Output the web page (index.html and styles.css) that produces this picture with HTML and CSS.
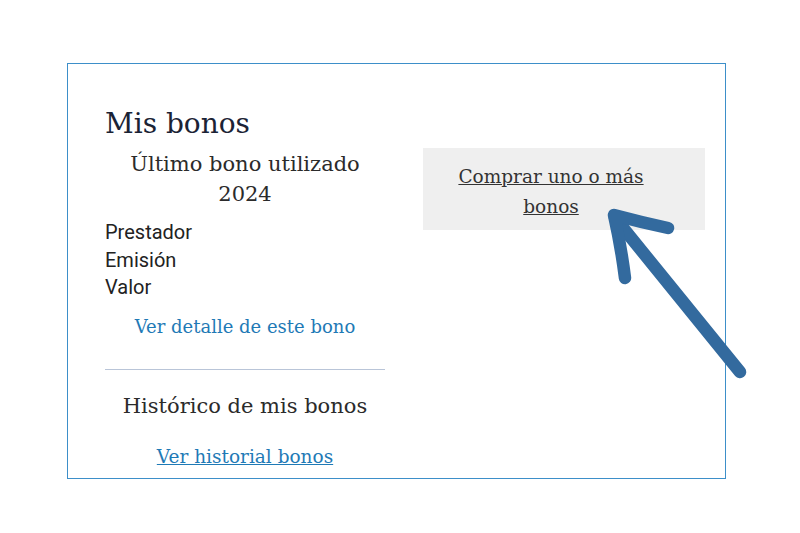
FILE: index.html
```html
<!DOCTYPE html>
<html lang="es">
<head>
<meta charset="utf-8">
<title>Mis bonos</title>
<link rel="stylesheet" href="styles.css">
</head>
<body>
<div class="card">
  <div class="left">
    <h2 class="title">Mis bonos</h2>
    <h3 class="subtitle">Último bono utilizado<br>2024</h3>
    <ul class="fields">
      <li>Prestador</li>
      <li>Emisión</li>
      <li>Valor</li>
    </ul>
    <a class="detail" href="#">Ver detalle de este bono</a>
    <hr class="sep">
    <h3 class="history">Histórico de mis bonos</h3>
    <a class="history-link" href="#">Ver historial bonos</a>
  </div>
  <div class="right">
    <div class="buy-box">
      <a class="buy" href="#">Comprar uno o más bonos</a>
    </div>
  </div>
</div>
<svg class="arrow" width="800" height="533" viewBox="0 0 800 533" aria-hidden="true">
  <g fill="none" stroke="#336a9e" stroke-width="12.5" stroke-linecap="round" stroke-linejoin="round">
    <path d="M740 372 L615 218"/>
    <path d="M668 228 Q640 222 614 215 Q621 246 625 278"/>
  </g>
</svg>
</body>
</html>
```

FILE: styles.css
```css
html, body {
  margin: 0;
  padding: 0;
  background: #ffffff;
}

body {
  width: 800px;
  height: 533px;
  position: relative;
  overflow: hidden;
}

.card {
  margin: 63px 0 0 67px;
  width: 659px;
  height: 416px;
  box-sizing: border-box;
  border: 1px solid #3d8fc9;
  display: flex;
  gap: 38px;
  padding: 43px 20px 0 37px;
}

.left {
  width: 280px;
  display: flex;
  flex-direction: column;
}

.title {
  margin: 0;
  font-family: "DejaVu Serif", serif;
  font-weight: normal;
  font-size: 28px;
  line-height: 34px;
  color: #1b2335;
}

.subtitle {
  margin: 8px 0 0;
  font-family: "DejaVu Serif", serif;
  font-weight: normal;
  font-size: 21px;
  line-height: 30px;
  color: #2b2b2b;
  text-align: center;
}

.fields {
  list-style: none;
  margin: 10px 0 0;
  padding: 0;
  font-family: Roboto, "Liberation Sans", sans-serif;
  font-size: 20px;
  line-height: 27.5px;
  color: #222222;
}

.detail {
  margin-top: 12px;
  font-family: "DejaVu Serif", serif;
  font-size: 18px;
  line-height: 26px;
  color: #1f7ab6;
  text-decoration: none;
  text-align: center;
}

.sep {
  margin: 29px 0 0;
  border: 0;
  border-top: 1px solid #b9c5d8;
  height: 0;
}

.history {
  margin: 21px 0 0;
  font-family: "DejaVu Serif", serif;
  font-weight: normal;
  font-size: 21px;
  line-height: 30px;
  color: #2b2b2b;
  text-align: center;
}

.history-link {
  margin-top: 23px;
  font-family: "DejaVu Serif", serif;
  font-size: 18.5px;
  line-height: 26px;
  color: #1f7ab6;
  text-decoration: underline;
  text-align: center;
  align-self: center;
}

.right {
  width: 282px;
}

.buy-box {
  margin-top: 41px;
  height: 82px;
  box-sizing: border-box;
  background: #efefef;
  padding: 14px 48px 0 22px;
  text-align: center;
}

.buy {
  font-family: "DejaVu Serif", serif;
  font-size: 18.5px;
  line-height: 30px;
  color: #333333;
  text-decoration: underline;
}

.arrow {
  position: absolute;
  left: 0;
  top: 0;
  pointer-events: none;
}
```
